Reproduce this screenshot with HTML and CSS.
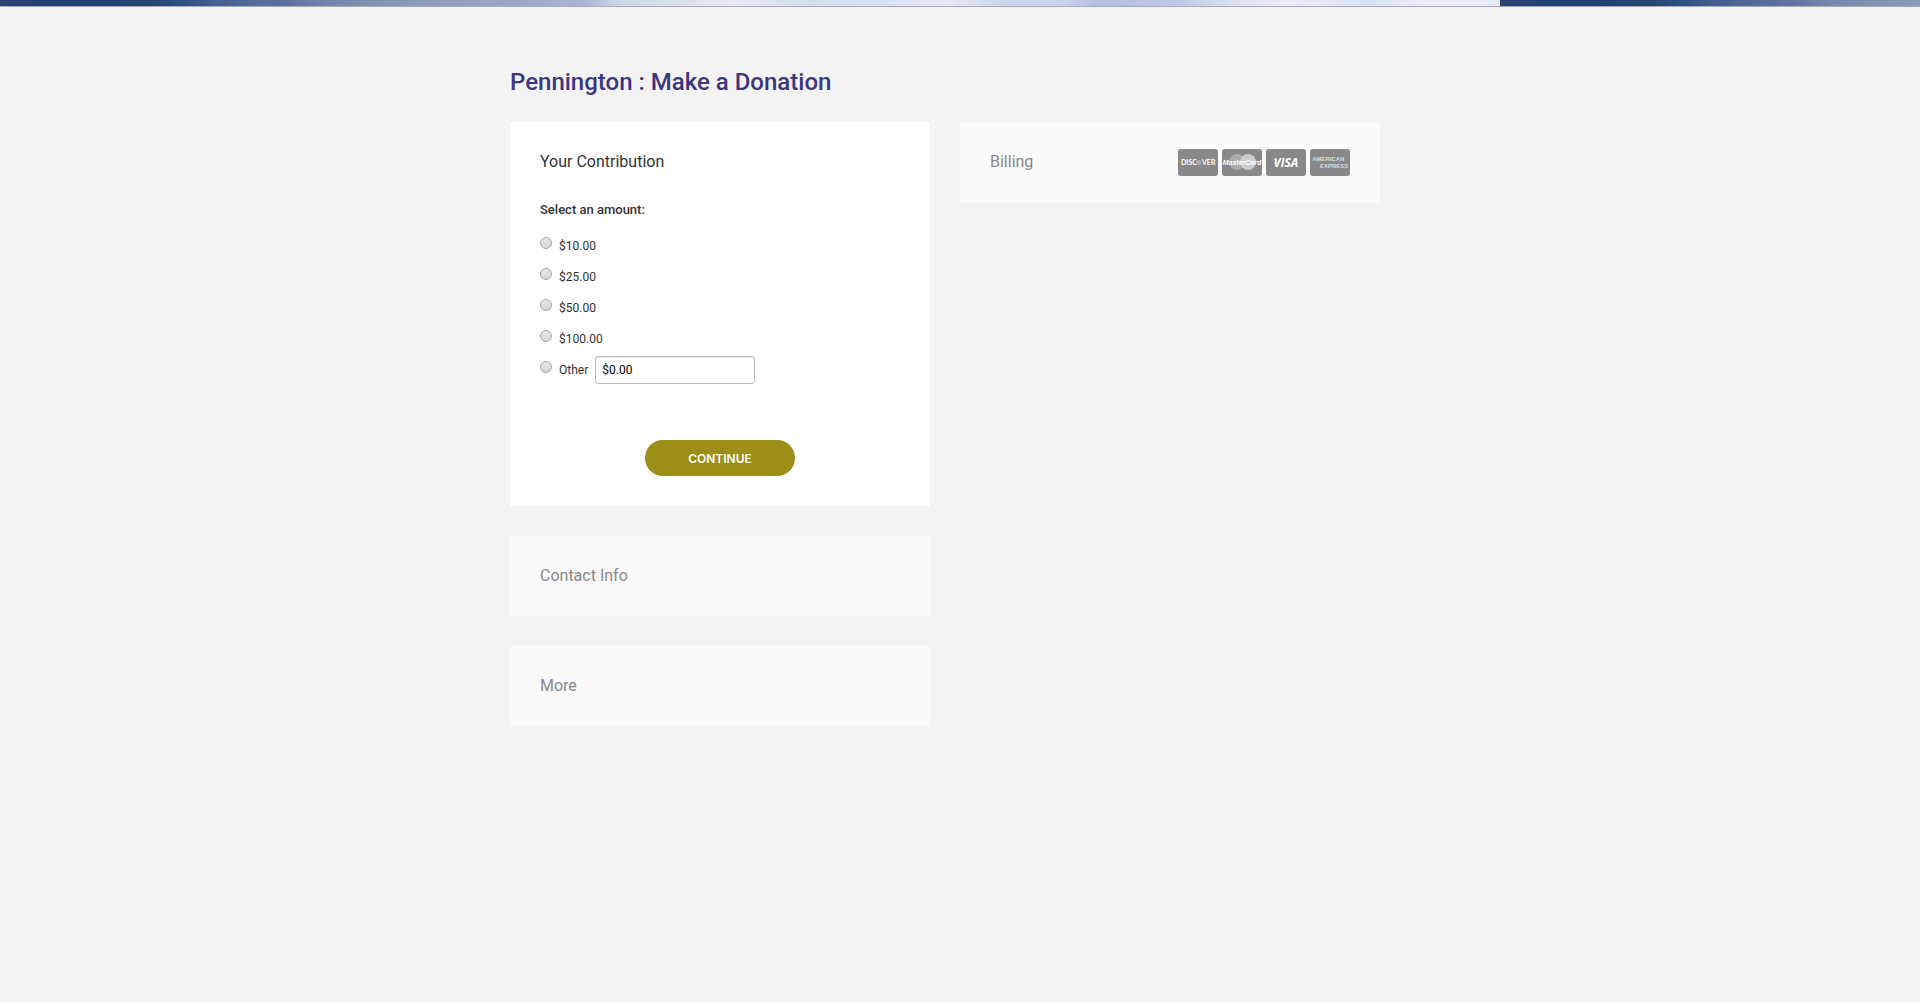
FILE: index.html
```html
<!DOCTYPE html>
<html lang="en">
  <head>
    <meta charset="UTF-8" />
    <meta name="viewport" content="width=device-width, initial-scale=1" />
    <title>Pennington : Make a Donation</title>
    <link rel="stylesheet" href="styles.css">
  </head>
  <body>
    <header class="banner"></header>

    <main class="container">
      <h1>Pennington : Make a Donation</h1>

      <form class="columns">
        <div class="column">
          <!-- Contribution -->
          <section class="card active">
            <h2>Your Contribution</h2>
            <fieldset class="amounts">
              <legend>Select an amount:</legend>
              <div class="amount">
                <input type="radio" name="amount" id="amount-10" value="10">
                <label for="amount-10">$10.00</label>
              </div>
              <div class="amount">
                <input type="radio" name="amount" id="amount-25" value="25">
                <label for="amount-25">$25.00</label>
              </div>
              <div class="amount">
                <input type="radio" name="amount" id="amount-50" value="50">
                <label for="amount-50">$50.00</label>
              </div>
              <div class="amount">
                <input type="radio" name="amount" id="amount-100" value="100">
                <label for="amount-100">$100.00</label>
              </div>
              <div class="amount">
                <input type="radio" name="amount" id="amount-other" value="other">
                <label for="amount-other">Other</label>
                <input type="text" class="other-value" value="$0.00" aria-label="Other amount">
              </div>
            </fieldset>
            <button type="button" class="continue">CONTINUE</button>
          </section>

          <section class="card">
            <h2>Contact Info</h2>
          </section>

          <section class="card">
            <h2>More</h2>
          </section>
        </div>

        <div class="column">
          <!-- Billing -->
          <section class="card billing">
            <h2>Billing</h2>
            <div class="card-logos">
              <svg class="logo" viewBox="0 0 40 27" role="img" aria-label="Discover">
                <rect width="40" height="27" rx="3" fill="#888" />
                <circle cx="21" cy="13.5" r="2.6" fill="#aaa" />
                <text class="discover" x="3" y="16">DISC</text>
                <text class="discover" x="24" y="16">VER</text>
              </svg>
              <svg class="logo" viewBox="0 0 40 27" role="img" aria-label="MasterCard">
                <rect width="40" height="27" rx="3" fill="#888" />
                <circle cx="15" cy="13" r="8" fill="#aaa" />
                <circle cx="26" cy="13" r="8" fill="#ccc" />
                <text class="mastercard" x="20" y="16">MasterCard</text>
              </svg>
              <svg class="logo" viewBox="0 0 40 27" role="img" aria-label="Visa">
                <rect width="40" height="27" rx="3" fill="#888" />
                <path d="M7 10h4l1 3z" fill="#bbb" />
                <text class="visa" x="20" y="18">VISA</text>
              </svg>
              <svg class="logo" viewBox="0 0 40 27" role="img" aria-label="American Express">
                <rect width="40" height="27" rx="3" fill="#888" />
                <text class="amex" x="2" y="12">AMERICAN</text>
                <text class="amex" x="10" y="19">EXPRESS</text>
              </svg>
            </div>
          </section>
        </div>
      </form>
    </main>
  </body>
</html>
```
FILE: styles.css
```css
* {
  box-sizing: border-box;
}

body {
  margin: 0;
  background: #f3f3f3;
  color: #333;
  font-family: Roboto, Arial, sans-serif;
}

.banner {
  height: 7px;
  border-bottom: 1px solid #aaa;
  background: linear-gradient(
      to right,
      #2f4372 0,
      #23426f 50px,
      #22436f 100px,
      #24466f 150px,
      #355380 185px,
      #4c6694 235px,
      #62739e 290px,
      #7687a8 330px,
      #8b9cb6 420px,
      #9aa8c4 520px,
      #b0b4d6 585px,
      #ced8e6 620px,
      #d7dfea 670px,
      #e8e7f6 735px,
      #d3deec 810px,
      #dae0f5 880px,
      #e5e6f6 950px,
      #cdd6ec 1000px,
      #cdd3ef 1060px,
      #b3bfdd 1100px,
      #c2c9e6 1180px,
      #d9dff1 1230px,
      #efebfa 1290px,
      #d6e0f2 1370px,
      #efebfa 1420px,
      #e7ecfa 1500px
    )
    0 0 / 1500px 6px repeat-x;
}

.container {
  max-width: 900px;
  margin: 0 auto;
  padding: 60px 30px 30px 0;
}

h1 {
  margin: 0 0 25px;
  color: #3b367d;
  font-size: 24px;
  font-weight: 500;
  line-height: 30px;
}

.columns {
  display: flex;
  align-items: flex-start;
  gap: 30px;
}

.column {
  flex: 1;
  display: flex;
  flex-direction: column;
  gap: 30px;
}

.card {
  padding: 30px;
  background: #fafafa;
}

.card h2 {
  margin: 0;
  color: #888;
  font-size: 16px;
  font-weight: 400;
  line-height: 20px;
}

.card.active {
  background: #fff;
}

.card.active h2 {
  color: #333;
}

.amounts {
  margin: 28px 0 56px;
  padding: 0;
  border: 0;
}

.amounts legend {
  margin-bottom: 12px;
  padding: 0;
  font-size: 13px;
  font-weight: 500;
  line-height: 20px;
}

.amount {
  display: flex;
  align-items: flex-start;
  font-size: 12px;
  line-height: 28px;
}

.amount + .amount {
  margin-top: 3px;
}

.amount input[type="radio"] {
  appearance: none;
  width: 12px;
  height: 12px;
  margin: 5px 7px 0 0;
  border: 1px solid #a5a5a5;
  border-radius: 50%;
  background: linear-gradient(#e6e6e6, #d8d8d8);
}

.amount input[type="radio"]:checked {
  background: #333;
}

.other-value {
  width: 160px;
  height: 28px;
  margin-left: 7px;
  padding: 0 6px;
  border: 1px solid #bbb;
  border-radius: 3px;
  box-shadow: inset 0 1px 1px rgba(0, 0, 0, 0.1);
  font-family: inherit;
  font-size: 12px;
  color: #000;
}

.continue {
  display: block;
  width: 150px;
  height: 36px;
  margin: 0 auto;
  padding: 0;
  border: 0;
  border-radius: 18px;
  background: #9a8e18;
  color: #fff;
  font-family: Inter, Arial, sans-serif;
  font-size: 12px;
  font-weight: 600;
  cursor: pointer;
}

.billing {
  display: flex;
  justify-content: space-between;
}

.card-logos {
  display: flex;
  gap: 4px;
  height: 20px;
  align-items: center;
}

.logo {
  width: 40px;
  height: 27px;
}

.logo text {
  fill: #fff;
  font-family: "Open Sans", Arial, sans-serif;
  font-weight: 700;
}

.logo .discover {
  font-family: Lato, Arial, sans-serif;
  font-size: 7px;
}

.logo .mastercard {
  font-family: "Liberation Sans", Arial, sans-serif;
  font-size: 7px;
  font-style: italic;
  text-anchor: middle;
}

.logo .visa {
  font-size: 12px;
  font-style: italic;
  text-anchor: middle;
}

.logo .amex {
  fill: #ddd;
  font-family: "Liberation Sans", Arial, sans-serif;
  font-size: 6px;
}
```
